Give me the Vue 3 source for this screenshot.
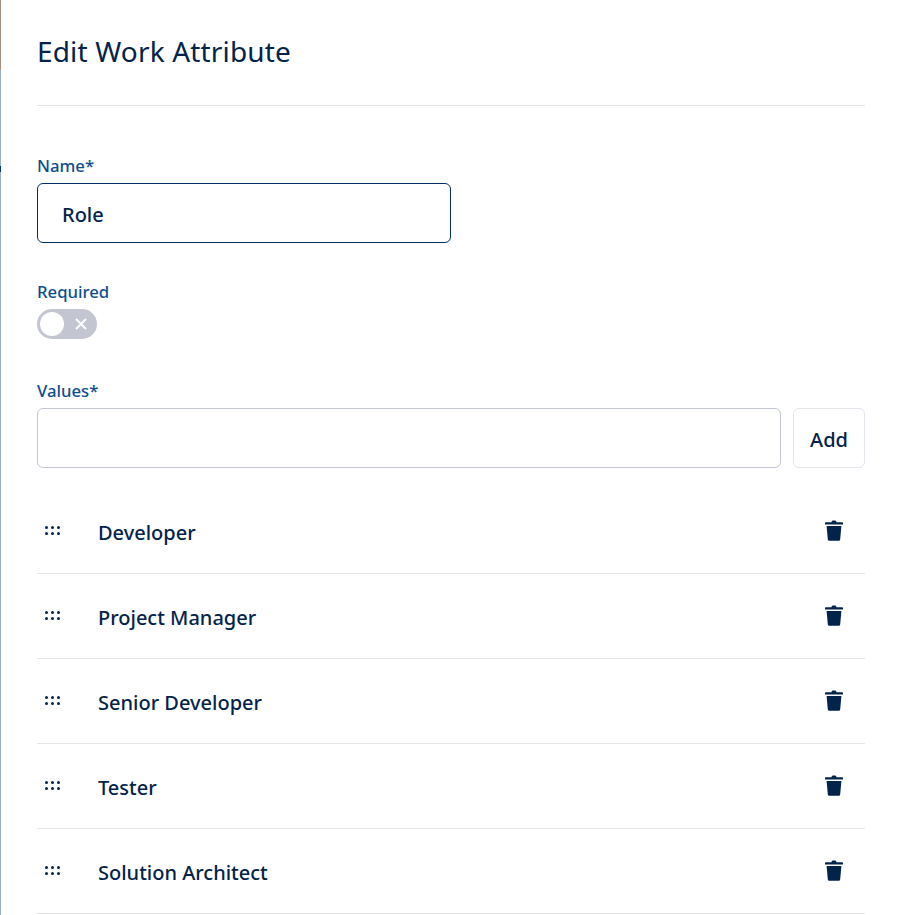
<template>
  <div class="page">
    <div class="backdrop">
      <i class="bd-photo"></i>
      <i class="bd-mark"></i>
    </div>
    <div class="panel">
      <h1 class="title">Edit Work Attribute</h1>

      <label class="field-label name-label">Name*</label>
      <input class="text-input name-input" type="text" value="Role" />

      <label class="field-label required-label">Required</label>
      <div class="toggle">
        <span class="knob"></span>
        <svg class="toggle-x" width="12" height="12" viewBox="0 0 12 12">
          <path d="M1 1l10 10M11 1L1 11" stroke="#fff" stroke-width="1.8" fill="none" />
        </svg>
      </div>

      <label class="field-label values-label">Values*</label>
      <div class="add-row">
        <input class="text-input value-input" type="text" />
        <button class="btn-add" type="button">Add</button>
      </div>

      <ul class="value-list">
        <li v-for="value in values" :key="value" class="value-row">
          <span class="grip">
            <i v-for="n in 6" :key="n"></i>
          </span>
          <span class="value-name">{{ value }}</span>
          <svg class="trash" width="18" height="21" viewBox="0 0 18 21">
            <path d="M6.5 2.2C6.7 1 7.4.6 9 .6s2.3.4 2.5 1.6H17c.6 0 1 .4 1 1v1.3H0V3.2c0-.6.4-1 1-1z" fill="#04234a" />
            <path d="M1.6 6h14.8l-1.2 13.2c-.1 1-.8 1.6-1.8 1.6H4.6c-1 0-1.7-.6-1.8-1.6z" fill="#04234a" />
          </svg>
        </li>
      </ul>
    </div>
  </div>
</template>

<script setup>
const values = ['Developer', 'Project Manager', 'Senior Developer', 'Tester', 'Solution Architect']
</script>

<style>
html,
body {
  margin: 0;
  background: #fff;
  overflow: hidden;
}
</style>

<style scoped>
.page {
  display: flex;
  width: 901px;
  height: 915px;
  overflow: hidden;
  font-family: 'Noto Sans', 'Open Sans', sans-serif;
  color: #04234a;
}

.backdrop {
  width: 1px;
  flex-shrink: 0;
  background: #9ab0c6;
  position: relative;
}

.bd-photo {
  position: absolute;
  left: 0;
  top: 0;
  width: 1px;
  height: 70px;
  background: #a8917f;
}

.bd-mark {
  position: absolute;
  left: 0;
  top: 166px;
  width: 1px;
  height: 6px;
  background: #0b3a66;
}

.panel {
  flex: 1;
  min-width: 0;
  padding: 0 36px;
  background: #fff;
}

.title {
  margin: 0;
  padding: 31px 0 34px;
  height: 40px;
  line-height: 40px;
  box-sizing: content-box;
  font-size: 28px;
  letter-spacing: 0.16px;
  font-weight: 400;
  border-bottom: 1px solid #e4e4ec;
}

.field-label {
  display: block;
  font-size: 16.7px;
  line-height: 22px;
  font-weight: 500;
  color: #0c4f8e;
}

.name-label {
  margin-top: 49px;
  margin-bottom: 6px;
}

.text-input {
  display: block;
  box-sizing: border-box;
  height: 60px;
  padding: 2px 24px 0;
  font: inherit;
  font-size: 20px;
  font-weight: 500;
  color: #04234a;
  background: #fff;
  border: 1px solid #c3c6d4;
  border-radius: 6px;
  outline: none;
}

.name-input {
  width: 414px;
  border-color: #04305f;
}

.required-label {
  margin-top: 38px;
  margin-bottom: 6px;
}

.toggle {
  position: relative;
  width: 60px;
  height: 30px;
  border-radius: 15px;
  background: #c3c6d1;
}

.knob {
  position: absolute;
  left: 3px;
  top: 3px;
  width: 24px;
  height: 24px;
  border-radius: 50%;
  background: #fff;
}

.toggle-x {
  position: absolute;
  left: 38px;
  top: 9px;
}

.values-label {
  margin-top: 41px;
  margin-bottom: 6px;
}

.add-row {
  display: flex;
  gap: 12px;
  width: 828px;
}

.value-input {
  flex: 1;
  min-width: 0;
}

.btn-add {
  width: 72px;
  height: 60px;
  padding: 2px 0 0;
  font: inherit;
  font-size: 20px;
  font-weight: 500;
  color: #04234a;
  background: #fff;
  border: 1px solid #e4e4ec;
  border-radius: 6px;
}

.value-list {
  list-style: none;
  margin: 21px 0 0;
  padding: 0;
  width: 828px;
}

.value-row {
  display: flex;
  align-items: center;
  height: 82px;
  padding-top: 2px;
  border-bottom: 1px solid #e4e4ec;
}

.grip {
  display: grid;
  grid-template-columns: repeat(3, 3px);
  gap: 3px;
  margin-left: 8px;
  margin-right: 38px;
  margin-top: -4px;
}

.grip i {
  width: 3px;
  height: 3px;
  border-radius: 50%;
  background: #04234a;
}

.value-name {
  flex: 1;
  font-size: 20px;
  font-weight: 500;
}

.trash {
  margin-right: 22px;
  margin-top: -4px;
}
</style>
